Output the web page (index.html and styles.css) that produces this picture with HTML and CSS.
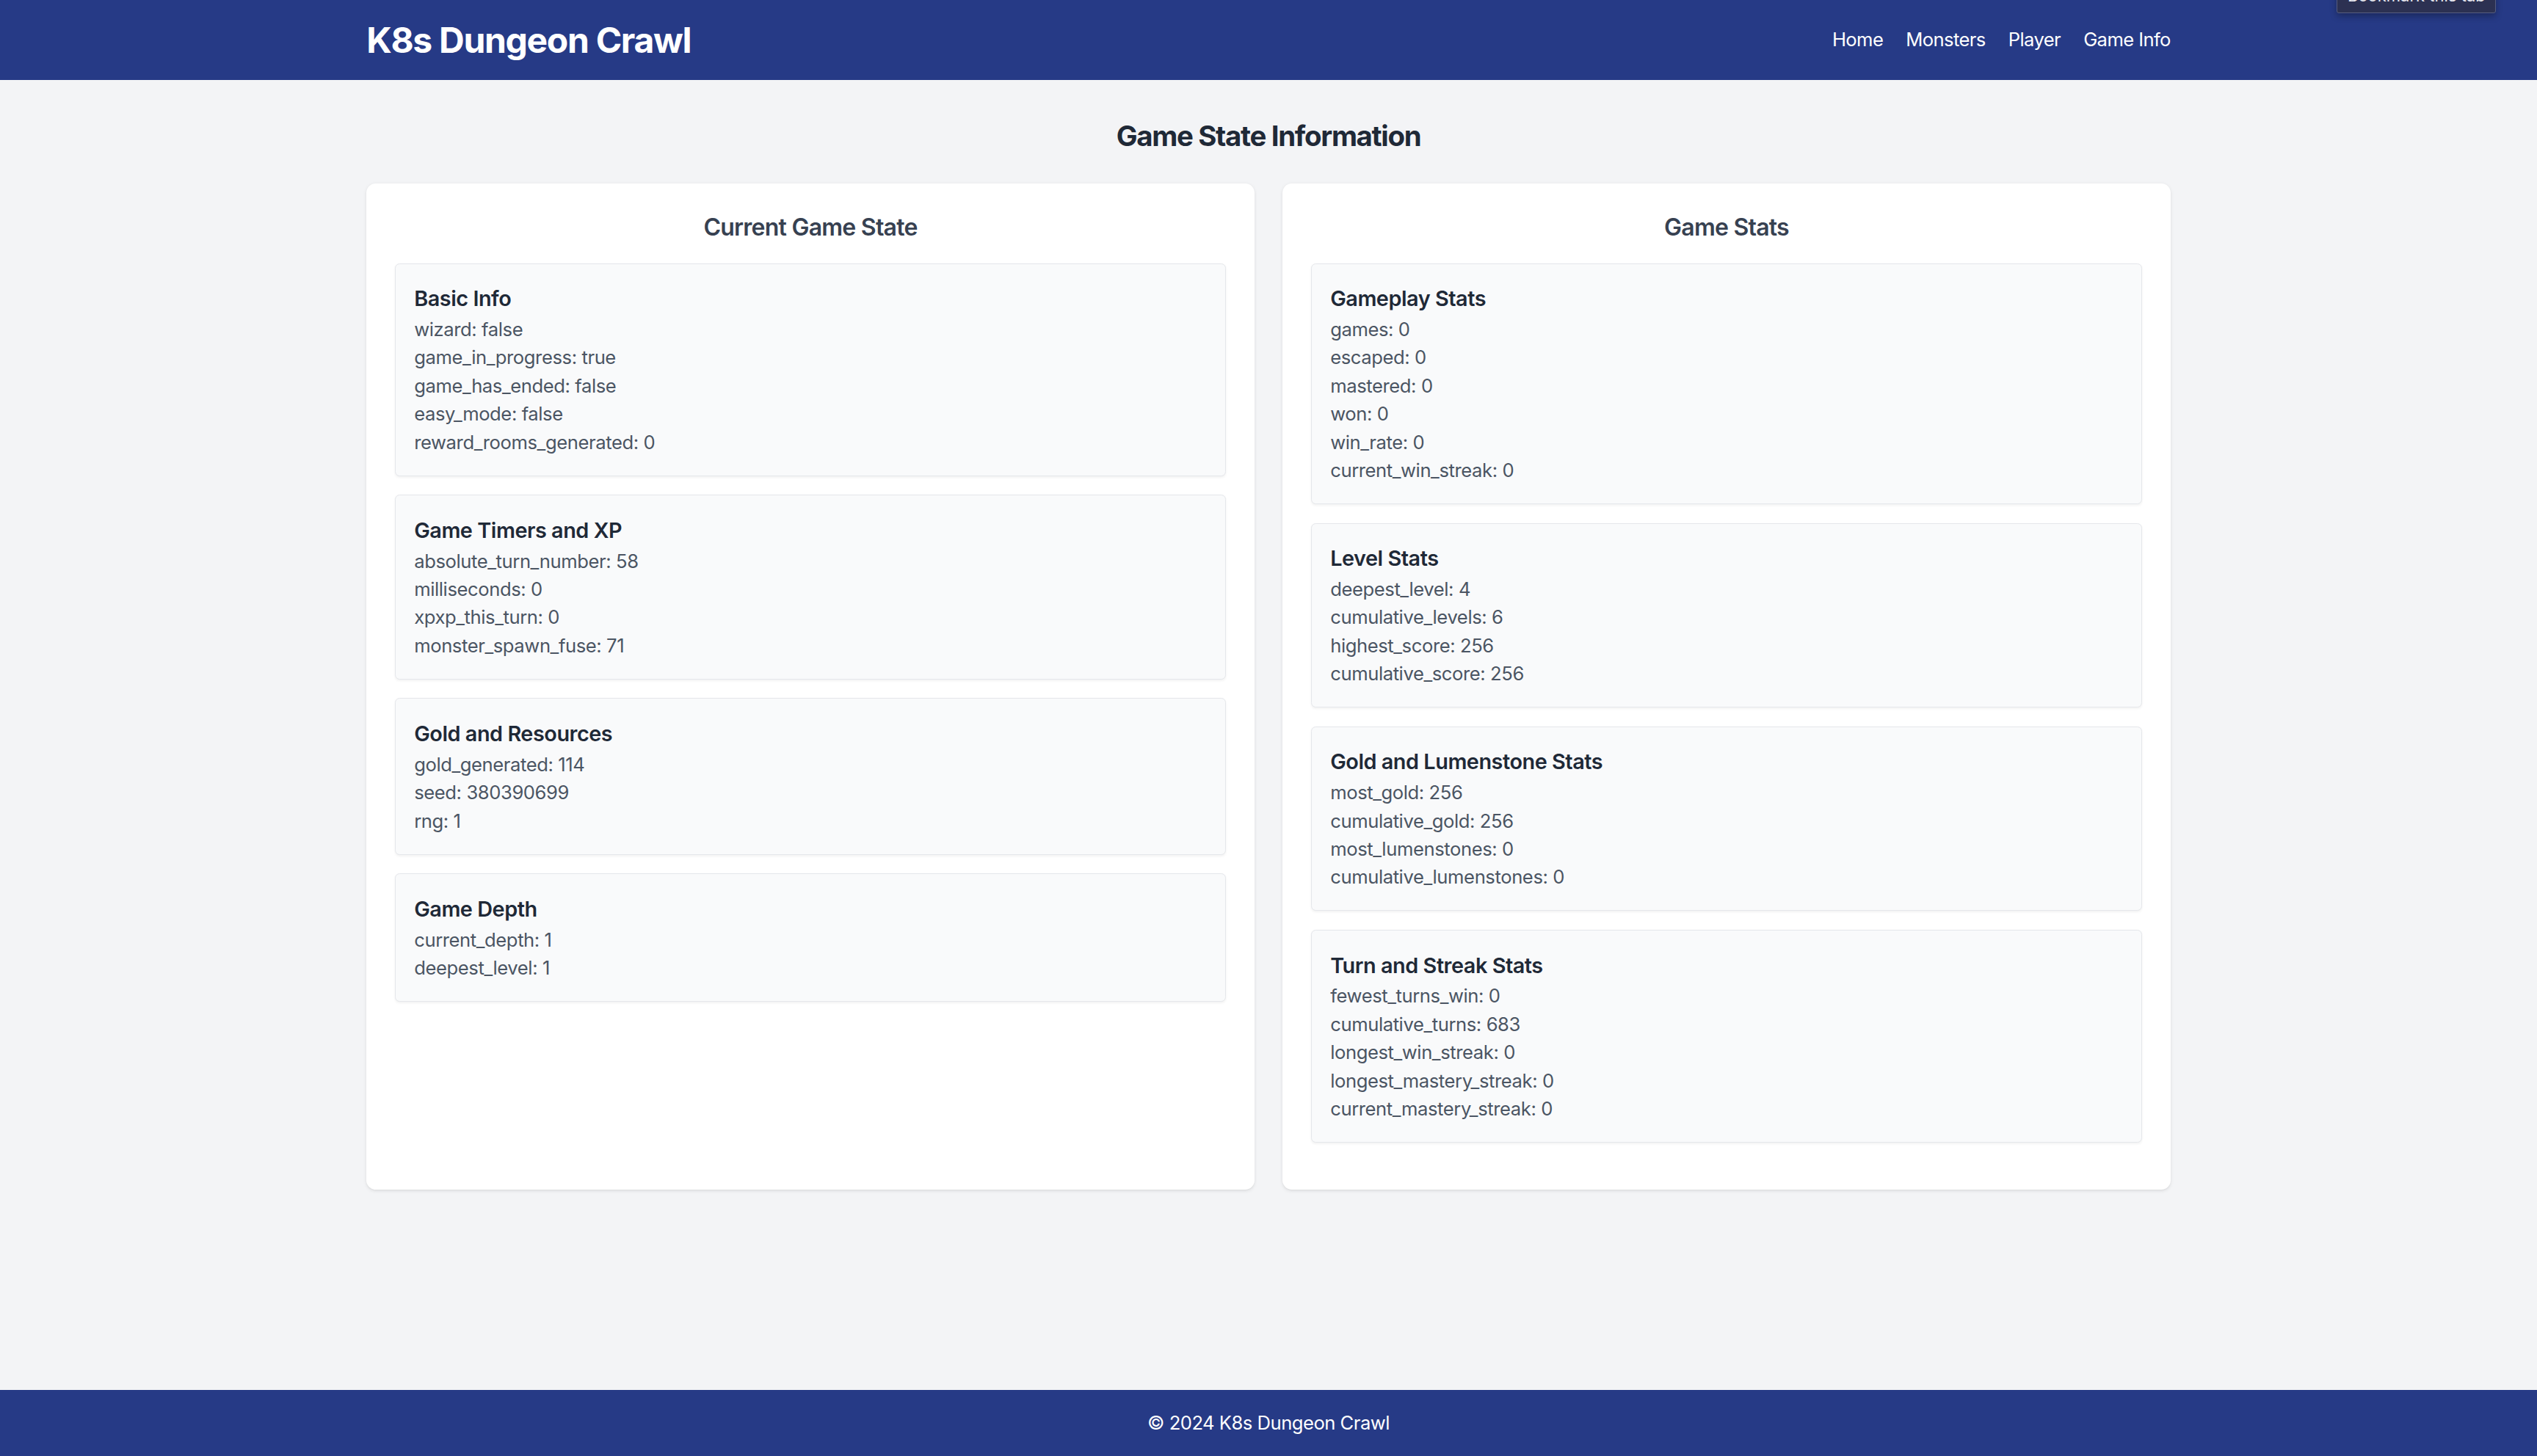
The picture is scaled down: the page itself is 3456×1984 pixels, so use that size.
FILE: index.html
```html
<!DOCTYPE html>
<html lang="en">
<head>
<meta charset="utf-8">
<title>K8s Dungeon Crawl - Game Info</title>
<link rel="stylesheet" href="styles.css">
</head>
<body>
<div class="tooltip">Bookmark this tab</div>
<header class="site-header">
  <div class="container header-inner">
    <div class="brand">K8s Dungeon Crawl</div>
    <nav class="nav">
      <a href="#">Home</a>
      <a href="#">Monsters</a>
      <a href="#">Player</a>
      <a href="#">Game Info</a>
    </nav>
  </div>
</header>
<main class="main">
  <div class="container">
    <h1 class="page-title">Game State Information</h1>
    <div class="grid">
      <section class="card">
        <h2 class="card-title">Current Game State</h2>
        <div class="box">
          <h3 class="box-title">Basic Info</h3>
          <p>wizard: false</p>
          <p>game_in_progress: true</p>
          <p>game_has_ended: false</p>
          <p>easy_mode: false</p>
          <p>reward_rooms_generated: 0</p>
        </div>
        <div class="box">
          <h3 class="box-title">Game Timers and XP</h3>
          <p>absolute_turn_number: 58</p>
          <p>milliseconds: 0</p>
          <p>xpxp_this_turn: 0</p>
          <p>monster_spawn_fuse: 71</p>
        </div>
        <div class="box">
          <h3 class="box-title">Gold and Resources</h3>
          <p>gold_generated: 114</p>
          <p>seed: 380390699</p>
          <p>rng: 1</p>
        </div>
        <div class="box">
          <h3 class="box-title">Game Depth</h3>
          <p>current_depth: 1</p>
          <p>deepest_level: 1</p>
        </div>
      </section>
      <section class="card">
        <h2 class="card-title">Game Stats</h2>
        <div class="box">
          <h3 class="box-title">Gameplay Stats</h3>
          <p>games: 0</p>
          <p>escaped: 0</p>
          <p>mastered: 0</p>
          <p>won: 0</p>
          <p>win_rate: 0</p>
          <p>current_win_streak: 0</p>
        </div>
        <div class="box">
          <h3 class="box-title">Level Stats</h3>
          <p>deepest_level: 4</p>
          <p>cumulative_levels: 6</p>
          <p>highest_score: 256</p>
          <p>cumulative_score: 256</p>
        </div>
        <div class="box">
          <h3 class="box-title">Gold and Lumenstone Stats</h3>
          <p>most_gold: 256</p>
          <p>cumulative_gold: 256</p>
          <p>most_lumenstones: 0</p>
          <p>cumulative_lumenstones: 0</p>
        </div>
        <div class="box">
          <h3 class="box-title">Turn and Streak Stats</h3>
          <p>fewest_turns_win: 0</p>
          <p>cumulative_turns: 683</p>
          <p>longest_win_streak: 0</p>
          <p>longest_mastery_streak: 0</p>
          <p>current_mastery_streak: 0</p>
        </div>
      </section>
    </div>
  </div>
</main>
<footer class="site-footer">
  <p>&copy; 2024 K8s Dungeon Crawl</p>
</footer>
</body>
</html>
```

FILE: styles.css
```css
* { box-sizing: border-box; }
html, body { margin: 0; padding: 0; }
html { overflow: hidden; }
body {
  font-family: Inter, "Noto Sans", "Liberation Sans", sans-serif;
  background: #f3f4f6;
  height: 100vh;
  display: flex;
  flex-direction: column;
  position: relative;
}
.container {
  width: 2457.6px;
  margin: 0 auto;
}
.site-header {
  flex: none;
  background: #263a86;
  height: 109px;
  display: flex;
  align-items: center;
}
.header-inner {
  display: flex;
  justify-content: space-between;
  align-items: center;
}
.brand {
  color: #fff;
  font-size: 48px;
  line-height: 57.6px;
  font-weight: 700;
  letter-spacing: -1.3px;
}
.nav {
  display: flex;
  gap: 31px;
}
.nav a {
  color: #fff;
  text-decoration: none;
  font-size: 25.6px;
  line-height: 38.4px;
  letter-spacing: -0.6px;
}
.main {
  flex: 1;
  min-height: 0;
  padding-top: 51.2px;
}
.page-title {
  margin: 0 0 38.4px;
  text-align: center;
  font-size: 38.4px;
  line-height: 51.2px;
  font-weight: 700;
  letter-spacing: -1.3px;
  color: #1f2937;
}
.grid {
  display: grid;
  grid-template-columns: 1fr 1fr;
  gap: 38.4px;
  align-items: stretch;
}
.card {
  background: #fff;
  border-radius: 12.8px;
  padding: 38.4px;
  box-shadow: 0 1.6px 4.8px rgba(0,0,0,0.08), 0 1.6px 3.2px -1.6px rgba(0,0,0,0.08);
}
.card-title {
  margin: 0 0 25.6px;
  text-align: center;
  font-size: 32px;
  line-height: 44.8px;
  font-weight: 600;
  letter-spacing: -0.75px;
  color: #374151;
}
.box {
  background: #f9fafb;
  border: 1px solid #e5e7eb;
  border-radius: 6.4px;
  padding: 25.6px;
  margin-bottom: 25.6px;
  box-shadow: 0 1.6px 3.2px rgba(0,0,0,0.05);
}
.box-title {
  margin: 0;
  font-size: 28.8px;
  line-height: 44.8px;
  font-weight: 600;
  letter-spacing: -0.45px;
  color: #1f2937;
}
.box p {
  margin: 0;
  font-size: 25.6px;
  line-height: 38.4px;
  letter-spacing: -0.4px;
  color: #4b5563;
}
.site-footer {
  flex: none;
  background: #263a86;
  height: 90px;
  display: flex;
  align-items: center;
  justify-content: center;
}
.site-footer p {
  margin: 0;
  color: #fff;
  font-size: 25.6px;
  line-height: 38.4px;
  letter-spacing: -0.5px;
}
.tooltip {
  position: absolute;
  top: -22px;
  right: 56px;
  width: 217px;
  height: 40px;
  background: #2c3152;
  border: 1px solid #565d80;
  border-radius: 3px;
  color: #e8e9f0;
  font-size: 22px;
  line-height: 22px;
  padding: 4px 0 0 14px;
  box-shadow: 0 4px 10px rgba(0,0,0,0.3);
  z-index: 5;
  white-space: nowrap;
}
```
